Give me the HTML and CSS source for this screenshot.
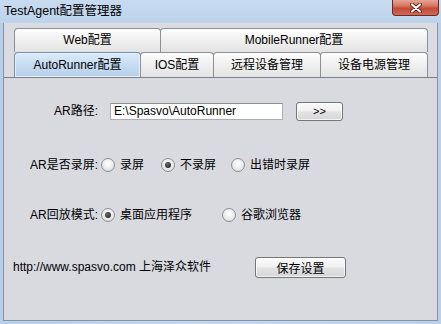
FILE: index.html
```html
<!DOCTYPE html>
<html lang="zh">
<head>
    <meta charset="UTF-8">
    <title>TestAgent配置管理器</title>
    <link rel="stylesheet" href="styles.css">
</head>
<body>
    <div class="window">
        <div class="titlebar">
            <span class="title">TestAgent配置管理器</span>
            <span class="close">
                <svg width="12" height="10" viewBox="0 0 12 10">
                    <path d="M2 1.5 L10 8.5 M10 1.5 L2 8.5" stroke="#5b2119" stroke-width="4" stroke-linecap="round"/>
                    <path d="M2 1.5 L10 8.5 M10 1.5 L2 8.5" stroke="#ffffff" stroke-width="2.2" stroke-linecap="round"/>
                </svg>
            </span>
        </div>

        <div class="client">
            <div class="tabs">
                <div class="tab-row back">
                    <div class="tab tab-web">Web配置</div>
                    <div class="tab tab-mobile">MobileRunner配置</div>
                </div>
                <div class="tab-row front">
                    <div class="tab tab-auto active">AutoRunner配置</div>
                    <div class="tab tab-ios">IOS配置</div>
                    <div class="tab tab-remote">远程设备管理</div>
                    <div class="tab tab-power">设备电源管理</div>
                </div>
            </div>

            <div class="panel">
                <div class="row row-path">
                    <span class="label">AR路径:</span>
                    <input class="path-field" type="text" value="E:\Spasvo\AutoRunner">
                    <button class="btn btn-browse">&gt;&gt;</button>
                </div>

                <div class="row row-record">
                    <span class="label">AR是否录屏:</span>
                    <span class="options record-options">
                        <span class="option"><span class="radio"></span>录屏</span>
                        <span class="option"><span class="radio checked"></span>不录屏</span>
                        <span class="option"><span class="radio"></span>出错时录屏</span>
                    </span>
                </div>

                <div class="row row-mode">
                    <span class="label">AR回放模式:</span>
                    <span class="options mode-options">
                        <span class="option"><span class="radio checked"></span>桌面应用程序</span>
                        <span class="option"><span class="radio"></span>谷歌浏览器</span>
                    </span>
                </div>

                <div class="row row-footer">
                    <span class="site">http://www.spasvo.com 上海泽众软件</span>
                    <button class="btn btn-save">保存设置</button>
                </div>
            </div>
        </div>
    </div>
</body>
</html>
```

FILE: styles.css
```css
/* === WINDOW FRAME === */
* {
    box-sizing: border-box;
}

body {
    margin: 0;
    font-family: "Liberation Sans", "Noto Sans CJK SC", sans-serif;
    font-size: 12px;
    color: #000;
}

.window {
    width: 441px;
    height: 324px;
    display: flex;
    flex-direction: column;
    background: linear-gradient(90deg, #b7cfea, #c3d8ef 50%, #b9d1eb);
}

.titlebar {
    height: 23px;
    flex-shrink: 0;
    display: flex;
    align-items: center;
    padding-left: 4px;
    background: linear-gradient(#c8dbf0, #bcd3ec);
}

.title {
    font-size: 12.5px;
    line-height: 14px;
    margin-top: -1px;
}

.close {
    margin-left: auto;
    margin-right: 2px;
    align-self: flex-start;
    width: 47px;
    height: 16px;
    display: flex;
    align-items: center;
    justify-content: center;
    border: 1px solid #6b2a22;
    border-top: none;
    border-radius: 0 0 4px 4px;
    background: linear-gradient(#e6a496, #d67563 40%, #c44a36 55%, #cf6a55);
}

.client {
    flex: 1;
    margin: 0 3px 3px;
    display: flex;
    flex-direction: column;
    background: #dadce2;
    border: 1px solid #8893a2;
    border-top: none;
}

/* === TABS === */
.tabs {
    padding: 5px 0 0 10px;
}

.tab-row {
    display: flex;
}

.tab-row.back {
    height: 24px;
}

.tab-row.front {
    height: 25px;
}

.tab {
    display: flex;
    align-items: center;
    justify-content: center;
    margin-right: -1px;
    line-height: 14px;
    border: 1px solid #8c8f97;
    border-bottom: none;
    border-radius: 4px 4px 0 0;
    background: linear-gradient(#fdfdfd, #ededed 60%, #e3e3e3);
}

.back .tab {
    padding-bottom: 2px;
}

.front .tab {
    padding-bottom: 1px;
}

.tab.active {
    border-color: #6f8fb3;
    background: linear-gradient(#dcebfa, #c6dcf2 50%, #b6d0ea);
    box-shadow: inset 0 0 0 1px #e9f2fb;
}

.tab-web { width: 147px; }
.tab-mobile { width: 268px; }
.tab-auto { width: 127px; }
.tab-ios { width: 74px; }
.tab-remote { width: 108px; }
.tab-power { width: 108px; }

/* === PANEL === */
.panel {
    flex: 1;
    border-top: 1px solid #7d8089;
    background: #d8dae0;
}

.row {
    display: flex;
    align-items: center;
    height: 22px;
    line-height: 14px;
}

.row-path { margin-top: 22px; }
.row-record { margin-top: 32px; }
.row-mode { margin-top: 28px; }
.row-footer { margin-top: 30px; padding-left: 9px; }

.label {
    width: 94px;
    text-align: right;
}

.path-field {
    margin-left: 12px;
    width: 173px;
    height: 17px;
    padding: 0 3px;
    border: 1px solid #abadb3;
    border-top-color: #8e9097;
    background: #fff;
    font-family: inherit;
    font-size: 12px;
    color: #000;
    outline: none;
}

.btn {
    padding: 0;
    font-family: inherit;
    font-size: 12px;
    color: #000;
    border: 1px solid #767676;
    border-radius: 3px;
    background: linear-gradient(#fbfbfb, #f0f0f0 45%, #e2e2e2 55%, #d6d6d6);
    box-shadow: inset 0 0 0 1px rgba(255,255,255,0.7);
}

.btn-browse {
    margin-left: 13px;
    width: 47px;
    height: 19px;
    font-size: 11px;
}

.btn-save {
    width: 91px;
    height: 21px;
}

/* === RADIO OPTIONS === */
.options {
    display: grid;
    margin-left: 3px;
}

.record-options {
    grid-template-columns: 60px 70px auto;
}

.mode-options {
    grid-template-columns: 121px auto;
}

.option {
    display: flex;
    align-items: center;
    gap: 5px;
    font-size: 12px;
}

.radio {
    position: relative;
    width: 14px;
    height: 14px;
    border-radius: 50%;
    border: 1px solid #8d8f93;
    background: radial-gradient(circle at 50% 40%, #ffffff 0%, #eeeeee 45%, #d2d3d6 100%);
}

.radio.checked::after {
    content: "";
    position: absolute;
    left: 3px;
    top: 3px;
    width: 6px;
    height: 6px;
    border-radius: 50%;
    background: radial-gradient(circle at 40% 35%, #6b6b6b, #141414);
}

.site {
    width: 242px;
}
```
